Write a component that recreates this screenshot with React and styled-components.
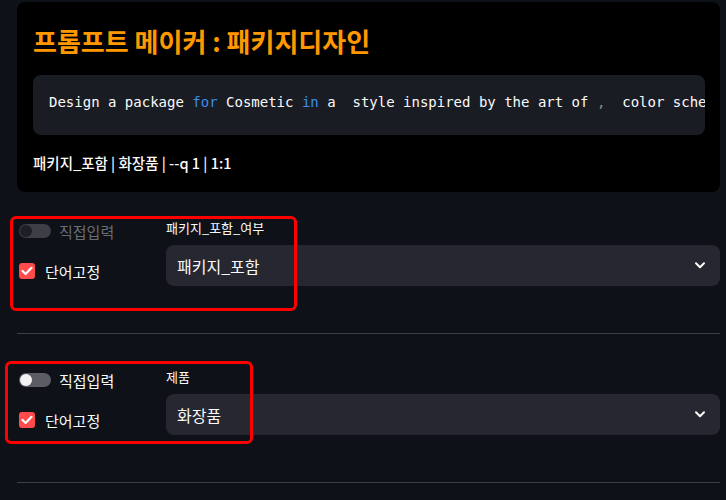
import React from "react";
import styled, { createGlobalStyle } from "styled-components";

const Global = createGlobalStyle`
  html, body { margin: 0; padding: 0; background: #0e1117; }
  body { font-family: "Noto Sans CJK KR", "Noto Sans", sans-serif; color: #fafafa; }
  * { box-sizing: border-box; }
`;

const Page = styled.div`
  width: 726px;
  height: 500px;
  overflow: hidden;
  padding: 2px 6px 0 17px;
  background: #0e1117;
`;

const Card = styled.div`
  background: #000;
  border-radius: 8px;
  padding: 21px 15px 19px 16px;
  margin-bottom: 26px;
`;

const Title = styled.h1`
  margin: 0;
  font-size: 26px;
  line-height: 36px;
  font-weight: 700;
  color: #ff9800;
  letter-spacing: 0;
`;

const CodeBlock = styled.pre`
  margin: 16px 0 0;
  background: #1a1c24;
  border-radius: 8px;
  padding: 16px 16px 22px;
  font-family: "DejaVu Sans Mono", "Liberation Mono", monospace;
  font-size: 14px;
  line-height: 22px;
  color: #fafafa;
  white-space: pre;
  overflow: hidden;
`;

const Kw = styled.span`
  color: ${(p) => p.$tone === "muted" ? "#8b8c92" : "#3b8eea"};
`;

const Summary = styled.div`
  margin-top: 18px;
  font-size: 14.5px;
  line-height: 20px;
  font-weight: 500;
  color: #fafafa;
`;

const Section = styled.div`
  position: relative;
  display: grid;
  grid-template-columns: 133px 1fr;
  column-gap: 16px;
  padding-bottom: 47px;
`;

const Divider = styled.hr`
  border: 0;
  height: 1px;
  margin: 0 0 33px;
  background: #3d3f46;
`;

const LeftCol = styled.div`
  display: flex;
  flex-direction: column;
  gap: 20px;
  padding: 3px 0 0 2px;
`;

const OptionRow = styled.label`
  display: flex;
  align-items: center;
  height: 20px;
  gap: ${(p) => p.$gap}px;
  font-size: 15px;
  color: ${(p) => (p.$disabled ? "#6b6d74" : "#fafafa")};
`;

const Track = styled.span`
  position: relative;
  width: 32px;
  height: 14px;
  border-radius: 7px;
  background: ${(p) => (p.$disabled ? "#3e3f46" : "#5c5d64")};
  flex: none;
`;

const Knob = styled.span`
  position: absolute;
  left: 1px;
  top: 1px;
  width: 12px;
  height: 12px;
  border-radius: 50%;
  background: ${(p) => (p.$disabled ? "#1e1f26" : "#f2f2f2")};
`;

const Check = styled.span`
  width: 16px;
  height: 16px;
  border-radius: 3px;
  background: #ff4b4b;
  display: flex;
  align-items: center;
  justify-content: center;
  flex: none;
`;

const RightCol = styled.div`
  display: flex;
  flex-direction: column;
  gap: 7px;
`;

const FieldLabel = styled.div`
  font-size: 13px;
  line-height: 20px;
  color: #fafafa;
`;

const Select = styled.div`
  height: 41px;
  background: #262730;
  border-radius: 8px;
  display: flex;
  align-items: center;
  justify-content: space-between;
  padding: 0 15px 0 11px;
  font-size: 16px;
  color: #fafafa;
`;

const Highlight = styled.div`
  position: absolute;
  border: 3px solid #ff0000;
  border-radius: 6px;
  pointer-events: none;
`;

const Chevron = () => (
  <svg width="10" height="7" viewBox="0 0 10 7">
    <path d="M1 1.2 L5 5.2 L9 1.2" fill="none" stroke="#fafafa" strokeWidth="2" strokeLinecap="round" strokeLinejoin="round" />
  </svg>
);

const CheckMark = () => (
  <svg width="12" height="10" viewBox="0 0 12 10">
    <path d="M1.5 5 L4.6 8 L10.5 1.8" fill="none" stroke="#fff" strokeWidth="2.2" strokeLinecap="round" strokeLinejoin="round" />
  </svg>
);

const FieldSection = ({ active, label, value, box }) => (
  <Section>
    <LeftCol>
      <OptionRow $gap={8} $disabled={!active}>
        <Track $disabled={!active}>
          <Knob $disabled={!active} />
        </Track>
        직접입력
      </OptionRow>
      <OptionRow $gap={10}>
        <Check>
          <CheckMark />
        </Check>
        단어고정
      </OptionRow>
    </LeftCol>
    <RightCol>
      <FieldLabel>{label}</FieldLabel>
      <Select>
        <span>{value}</span>
        <Chevron />
      </Select>
    </RightCol>
    <Highlight style={box} />
  </Section>
);

export default function App() {
  return (
    <>
      <Global />
      <Page>
        <Card>
          <Title>프롬프트 메이커 : 패키지디자인</Title>
          <CodeBlock>
            Design a package <Kw>for</Kw> Cosmetic <Kw>in</Kw> a  style inspired by the art of <Kw $tone="muted">,</Kw>  color scheme
          </CodeBlock>
          <Summary>패키지_포함 | 화장품 | --q 1 | 1:1</Summary>
        </Card>
        <FieldSection
          active={false}
          label="패키지_포함_여부"
          value="패키지_포함"
          box={{ left: -7, top: -2, width: 287, height: 95 }}
        />
        <Divider />
        <FieldSection
          active={true}
          label="제품"
          value="화장품"
          box={{ left: -12, top: -6, width: 248, height: 83 }}
        />
        <Divider />
      </Page>
    </>
  );
}
